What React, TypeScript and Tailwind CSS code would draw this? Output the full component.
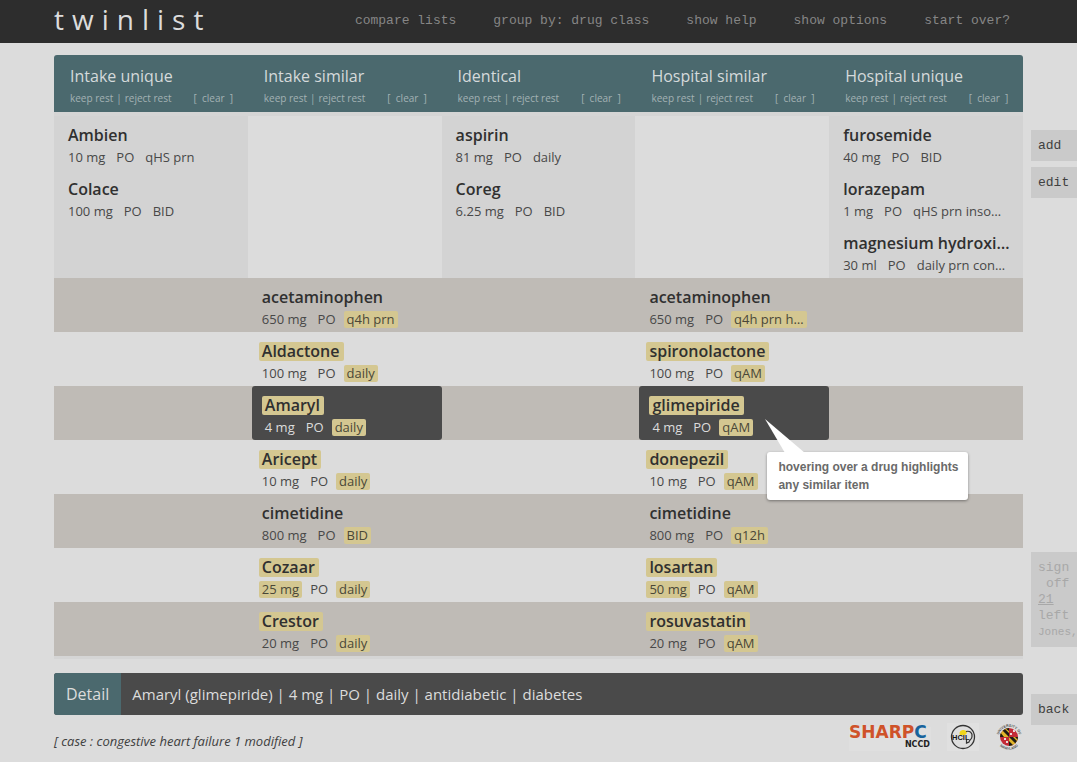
import React from "react";

type Drug = {
  name: string;
  dose: string;
  route: string;
  freq: string;
  marks?: string;
};

type Pair = { intake: Drug; hospital: Drug; active?: boolean };

const navLinks = ["compare lists", "group by: drug class", "show help", "show options", "start over?"];

const columns = ["Intake unique", "Intake similar", "Identical", "Hospital similar", "Hospital unique"];

const uniques: Drug[][] = [
  [
    { name: "Ambien", dose: "10 mg", route: "PO", freq: "qHS prn" },
    { name: "Colace", dose: "100 mg", route: "PO", freq: "BID" },
  ],
  [],
  [
    { name: "aspirin", dose: "81 mg", route: "PO", freq: "daily" },
    { name: "Coreg", dose: "6.25 mg", route: "PO", freq: "BID" },
  ],
  [],
  [
    { name: "furosemide", dose: "40 mg", route: "PO", freq: "BID" },
    { name: "lorazepam", dose: "1 mg", route: "PO", freq: "qHS prn inso…" },
    { name: "magnesium hydroxi…", dose: "30 ml", route: "PO", freq: "daily prn con…" },
  ],
];

/* marks: n = name, d = dose, f = frequency differs between the two lists */
const pairs: Pair[] = [
  {
    intake: { name: "acetaminophen", dose: "650 mg", route: "PO", freq: "q4h prn", marks: "f" },
    hospital: { name: "acetaminophen", dose: "650 mg", route: "PO", freq: "q4h prn h…", marks: "f" },
  },
  {
    intake: { name: "Aldactone", dose: "100 mg", route: "PO", freq: "daily", marks: "nf" },
    hospital: { name: "spironolactone", dose: "100 mg", route: "PO", freq: "qAM", marks: "nf" },
  },
  {
    active: true,
    intake: { name: "Amaryl", dose: "4 mg", route: "PO", freq: "daily", marks: "nf" },
    hospital: { name: "glimepiride", dose: "4 mg", route: "PO", freq: "qAM", marks: "nf" },
  },
  {
    intake: { name: "Aricept", dose: "10 mg", route: "PO", freq: "daily", marks: "nf" },
    hospital: { name: "donepezil", dose: "10 mg", route: "PO", freq: "qAM", marks: "nf" },
  },
  {
    intake: { name: "cimetidine", dose: "800 mg", route: "PO", freq: "BID", marks: "f" },
    hospital: { name: "cimetidine", dose: "800 mg", route: "PO", freq: "q12h", marks: "f" },
  },
  {
    intake: { name: "Cozaar", dose: "25 mg", route: "PO", freq: "daily", marks: "ndf" },
    hospital: { name: "losartan", dose: "50 mg", route: "PO", freq: "qAM", marks: "ndf" },
  },
  {
    intake: { name: "Crestor", dose: "20 mg", route: "PO", freq: "daily", marks: "nf" },
    hospital: { name: "rosuvastatin", dose: "20 mg", route: "PO", freq: "qAM", marks: "nf" },
  },
];

function Part({ text, marked, active }: { text: string; marked?: boolean; active?: boolean }) {
  const tone = marked ? "bg-[#d4c791] text-[#4a4738]" : active ? "text-[#dcdcdc]" : "text-[#484848]";
  return <span className={"rounded-xs px-[3px] leading-[17px] " + tone}>{text}</span>;
}

function DrugItem({ drug, active }: { drug: Drug; active?: boolean }) {
  const marks = drug.marks ?? "";
  return (
    <div
      className={
        "pt-2 pb-0.5 whitespace-nowrap " +
        (active ? "ml-1 rounded-[3px] bg-[#4a4a4a] pl-2.5" : "pl-[11px]")
      }
    >
      <div className="flex h-[22px] items-center">
        <span
          className={
            "rounded-xs pr-1 pl-[3px] text-base leading-[19px] font-semibold text-[#303030] " +
            (marks.includes("n") ? "bg-[#d4c791]" : "")
          }
        >
          {drug.name}
        </span>
      </div>
      <div className="flex h-[22px] items-center gap-[5px] text-[13px]">
        <Part text={drug.dose} marked={marks.includes("d")} active={active} />
        <Part text={drug.route} active={active} />
        <Part text={drug.freq} marked={marks.includes("f")} active={active} />
      </div>
    </div>
  );
}

function HoverTip() {
  return (
    <div className="absolute top-[33px] left-[130px] z-10">
      <svg width="42" height="34" viewBox="0 0 42 34" className="block" aria-hidden="true">
        <path d="M0 0 L40 34 L20 34 Z" fill="#fff" />
      </svg>
      <div
        role="tooltip"
        className="ml-0.5 -mt-px rounded-[3px] bg-white py-1.5 pr-2.5 pl-[11px] font-['Liberation_Sans',Arial,sans-serif] text-xs leading-[18px] font-bold whitespace-nowrap text-[#6a6a6a] shadow-[0_1px_3px_rgba(0,0,0,0.4)]"
      >
        hovering over a drug highlights
        <br />
        any similar item
      </div>
    </div>
  );
}

function SharpLogo() {
  return (
    <svg width="82" height="28" viewBox="0 0 82 28" role="img" aria-label="SHARPC NCCD">
      <rect y="4" width="82" height="24" fill="#dfdfdf" />
      <text x="0" y="15" fontFamily="DejaVu Sans, sans-serif" fontSize="17" fontWeight="bold">
        <tspan fill="#cf5229">SHARP</tspan>
        <tspan fill="#17639c">C</tspan>
      </text>
      <text x="81" y="24" textAnchor="end" fontFamily="DejaVu Sans, sans-serif" fontSize="8" fontWeight="bold" fill="#222">
        NCCD
      </text>
    </svg>
  );
}

function HcilLogo() {
  return (
    <svg width="32" height="28" viewBox="0 0 32 28" role="img" aria-label="HCIL">
      <rect width="32" height="28" fill="#e0e0e0" />
      <circle cx="16" cy="14" r="11.5" fill="#dedede" stroke="#333" strokeWidth="1.3" />
      <path d="M12.500 11 A3.800 3.800 0 0 1 20 10 L18 12 H13 Z" fill="#f0d51c" />
      <path d="M19 8.500 C23 7.500 25.500 10 25 13.500 C25 16.500 22.500 16.500 22 19 L19.500 20 V17" fill="none" stroke="#333" strokeWidth="1.200" />
      <text x="5" y="16.500" fontFamily="Liberation Sans, Arial, sans-serif" fontSize="7.500" fontWeight="bold" fill="#151515">
        HCIL
      </text>
    </svg>
  );
}

function UniversitySeal() {
  return (
    <svg width="28" height="28" viewBox="0 0 28 28" role="img" aria-label="University of Maryland">
      <defs>
        <clipPath id="globe">
          <circle cx="14" cy="14" r="9" />
        </clipPath>
        <path id="arcTop" d="M3.800 14 A10.200 10.200 0 0 1 24.200 14" />
        <path id="arcBottom" d="M1.200 14 A12.800 12.800 0 0 0 26.800 14" />
      </defs>
      <g clipPath="url(#globe)">
        <rect x="5" y="5" width="18" height="18" fill="#c42a36" />
        <path d="M5 5 H14 V14 H5 Z M14 14 H23 V23 H14 Z" fill="#e0b52a" />
        <path d="M5 5 L9 5 L14 10 V14 Z M5 9 L9 14 H5 Z M10 5 H14 V8 Z M14 14 L18 14 L23 19 V23 Z M14 18 L19 23 H14 Z M20 14 H23 V17 Z" fill="#1e1b16" />
        <path d="M18 7 h2 v2 h-2 Z M15 10 h2 v2 h-2 Z M9 15 h2 v2 h-2 Z M11 18 h2 v2 h-2 Z" fill="#e8dada" />
      </g>
      <text fontFamily="Liberation Sans, Arial, sans-serif" fontSize="3.600" fontWeight="bold" fill="#555">
        <textPath href="#arcTop" startOffset="50%" textAnchor="middle">
          UNIVERSITY OF
        </textPath>
      </text>
      <text fontFamily="Liberation Sans, Arial, sans-serif" fontSize="3.600" fontWeight="bold" fill="#555">
        <textPath href="#arcBottom" startOffset="50%" textAnchor="middle">
          MARYLAND
        </textPath>
      </text>
    </svg>
  );
}

const sideButton =
  "block w-full bg-[#cacaca] pt-2 pb-[7px] pl-[7px] text-left font-['Liberation_Mono','Courier_New',monospace] text-[13px] leading-4";

export default function App() {
  return (
    <div className="min-h-screen overflow-x-hidden bg-[#dcdcdc] font-['Open_Sans','Noto_Sans',sans-serif]">
      <header className="flex h-[43px] items-start justify-between bg-[#2d2d2d] pr-[67px] pl-[54px]">
        <h1 className="text-[28px] leading-[38px] font-medium tracking-[8px] text-[#dcdcdc]">twinlist</h1>
        <nav className="flex gap-[37px] font-['Liberation_Mono','Courier_New',monospace] text-[13px] leading-[42px] text-[#868686]">
          {navLinks.map((label) => (
            <a key={label} href="#" className="whitespace-nowrap">
              {label}
            </a>
          ))}
        </nav>
      </header>

      <div className="flex gap-2 pl-[54px]">
        <main className="min-w-0 flex-1 pt-3">
          <table className="w-full table-fixed border-collapse">
            <thead>
              <tr>
                {columns.map((title) => (
                  <th
                    key={title}
                    scope="col"
                    className="bg-[#4b696e] pt-2.5 pb-[3px] pl-4 text-left font-medium whitespace-nowrap first:rounded-tl-[3px] last:rounded-tr-[3px]"
                  >
                    <div className="text-base leading-[22px] text-[#d5dadb]">{title}</div>
                    <div className="flex h-[22px] items-center text-[10px] text-[#a3b2b4]">
                      <button type="button">keep rest</button>
                      <span className="px-[3px]">|</span>
                      <button type="button">reject rest</button>
                      <button type="button" className="ml-[22px]">[&nbsp; clear &nbsp;]</button>
                    </div>
                  </th>
                ))}
              </tr>
            </thead>
            <tbody>
              <tr className="border-t-4 border-[#d5d5d5]">
                {uniques.map((list, i) => (
                  <td key={columns[i]} className={"p-0 align-top " + (i % 2 === 0 ? "bg-[#d3d3d3]" : "")}>
                    {list.map((drug) => (
                      <DrugItem key={drug.name} drug={drug} />
                    ))}
                  </td>
                ))}
              </tr>
              {pairs.map((pair) => (
                <tr key={pair.intake.name} className="odd:bg-[#dcdcdc] even:bg-[#bfbbb6]">
                  <td className="p-0" />
                  <td className="p-0">
                    <DrugItem drug={pair.intake} active={pair.active} />
                  </td>
                  <td className="p-0" />
                  <td className="relative p-0">
                    <DrugItem drug={pair.hospital} active={pair.active} />
                    {pair.active && <HoverTip />}
                  </td>
                  <td className="p-0" />
                </tr>
              ))}
            </tbody>
          </table>
          <div className="h-[3px] bg-[#d5d5d5]" />

          <section className="mt-3.5 flex overflow-hidden rounded-[3px] bg-[#4a4a4a] leading-[42px] font-medium text-[#dcdcdc]">
            <h2 className="bg-[#4b696e] px-3 text-base leading-[42px]">Detail</h2>
            <p className="px-[11px] text-[15px]">Amaryl (glimepiride) | 4 mg | PO | daily | antidiabetic | diabetes</p>
          </section>

          <footer className="flex items-start justify-between pt-2">
            <p className="pt-[7px] text-[13px] leading-[22px] text-[#404040] italic">
              [ case : congestive heart failure 1 modified ]
            </p>
            <div className="flex items-center gap-4">
              <SharpLogo />
              <HcilLogo />
              <UniversitySeal />
            </div>
          </footer>
        </main>

        <aside className="w-[46px] shrink-0 pt-[87px] text-[#404040]">
          <button type="button" className={sideButton}>add</button>
          <button type="button" className={sideButton + " mt-1.5"}>edit</button>
          <button type="button" className={sideButton + " mt-[354px] overflow-hidden text-[#a8a8a8]"}>
            <span className="block">sign</span>
            <span className="block pl-2">off</span>
            <span className="block underline">21</span>
            <span className="block">left</span>
            <span className="block text-[11px] leading-4">Jones,</span>
          </button>
          <button type="button" className={sideButton + " mt-[47px]"}>back</button>
        </aside>
      </div>
    </div>
  );
}
